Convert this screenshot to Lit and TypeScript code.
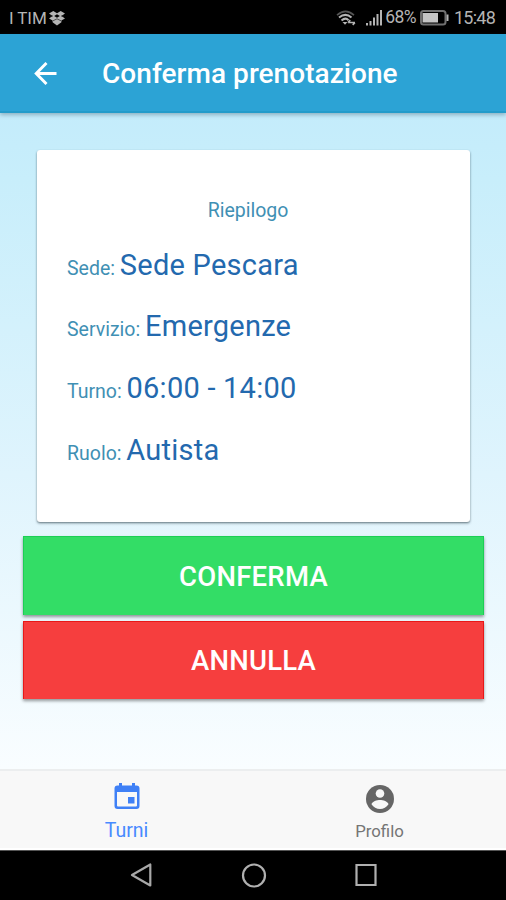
import { LitElement, html, css } from "lit";
import { customElement } from "lit/decorators.js";

const ROWS = [
  { label: "Sede:", value: "Sede Pescara" },
  { label: "Servizio:", value: "Emergenze" },
  { label: "Turno:", value: "06:00 - 14:00" },
  { label: "Ruolo:", value: "Autista" },
];

@customElement("status-bar")
class StatusBar extends LitElement {
  static styles = css`
    :host { display: flex; align-items: center; height: 34px; background: #000; color: #b4b4b4;
      font-size: 17px; line-height: 34px; padding: 2px 11px 0 9px; box-sizing: border-box; }
    svg { display: block; flex: none; }
    .carrier { letter-spacing: -0.1px; margin-right: 2px; }
    .spacer { flex: 1; }
    .wifi { margin-right: 10px; }
    .pct { font-size: 17.5px; letter-spacing: -0.6px; margin: 0 4px 0 2px; padding-bottom: 2px; line-height: 32px; }
    .battery { margin-right: 5px; }
    .time { font-size: 18px; letter-spacing: -0.75px; }
  `;
  render() {
    return html`
      <span class="carrier">I TIM</span>
      <svg width="16" height="15" viewBox="0 0 16 15" fill="#b4b4b4">
        <path d="M4.300 0 8 2.200 11.700 0 16 2.600 12.500 5 16 7.400 12.400 9.600V11.300L8 14.400 3.600 11.300V9.600L0 7.400 3.500 5 0 2.600Z" />
        <path d="M8 3.300 10.800 5 8 6.700 5.200 5Z" fill="#000" />
        <path d="M1 5h3M12 5h3M4 9.800 8 7.800 12 9.800" fill="none" stroke="#222" stroke-width="0.700" />
      </svg>
      <span class="spacer"></span>
      <svg class="wifi" width="20" height="16" viewBox="0 0 20 16" fill="none" stroke="#b4b4b4" stroke-width="1.6">
        <path d="M1 5.200Q9.500 -2.600 18 5.200" stroke="#555" />
        <path d="M3 7.500Q9.500 2.200 15.500 7.500M5.500 10.500Q9.500 7 12.500 10.200" stroke-width="2" />
        <path d="M6.500 12h5l-2.500 2.800z" fill="#b4b4b4" stroke="none" />
        <path d="M12 12.500h7M12 12.500l2.300-2.300M19 12.500l-2.300 2.300" stroke-width="1.700" />
      </svg>
      <svg width="17" height="16" viewBox="0 0 17 16" fill="#b4b4b4">
        <path d="M0 13h2v2.500H0zM3.500 11h2v4.500h-2zM7 7.500h2v8H7zM10.500 4h2v11.500h-2zM14 0h2v15.500h-2z" />
      </svg>
      <span class="pct">68%</span>
      <svg class="battery" width="29" height="16" viewBox="0 0 29 16">
        <rect x="1" y="1" width="24.500" height="13.500" rx="2.500" fill="none" stroke="#707070" stroke-width="2" />
        <rect x="2.500" y="3" width="15.500" height="9.500" fill="#c4c4c4" />
        <path d="M26.500 4.500h2v6.500h-2z" fill="#b4b4b4" />
      </svg>
      <span class="time">15:48</span>
    `;
  }
}

@customElement("app-root")
class AppRoot extends LitElement {
  static styles = css`
    :host { display: flex; flex-direction: column; width: 506px; height: 900px; overflow: hidden;
      font-family: Roboto, sans-serif; background: #fff; }
    svg { display: block; flex: none; }
    .header { flex: none; display: flex; align-items: center; height: 79px; box-sizing: border-box;
      background: #2ca3d5; border-bottom: 2px solid #239bca; padding: 2px 0 0 34px; z-index: 1;
      box-shadow: 0 2px 4px rgba(60, 90, 110, 0.4); }
    .title { margin: 0 0 0 45px; color: #fff; font-weight: 500; font-size: 28px; line-height: 40px;
      letter-spacing: 0.05px; padding-top: 1px; white-space: nowrap; }
    .content { flex: none; height: 656px; box-sizing: border-box; display: flex; flex-direction: column;
      padding: 37px 22px 0 23px; background: linear-gradient(#c4ecfb, #c8eefb 10%, #dff4fd 55%, #f9fdff); }
    .card { flex: none; height: 372px; margin: 0 14px; box-sizing: border-box; background: #fff; border-radius: 3px;
      box-shadow: 0 1px 2px rgba(20, 40, 50, 0.5), 0 2px 3px rgba(20, 40, 50, 0.15);
      padding: 47px 30px 0; color: #3f90b4; font-size: 19.500px; }
    .heading { text-align: center; font-size: 19.500px; font-weight: 400; line-height: 28px; margin: 0 11px 9.700px 0; }
    .row { height: 61.800px; line-height: 61.800px; white-space: nowrap; }
    .value { color: #2369ae; font-size: 29px; letter-spacing: 0.24px; }
    .button { flex: none; display: flex; justify-content: center; align-items: center; height: 79px;
      box-sizing: border-box; width: 461px; border: 0; padding: 1px 0 0;
      font: 500 27.500px Roboto, sans-serif; letter-spacing: 0.25px; color: #fff; }
    .confirm { margin-top: 14px; background: #33dd66;
      box-shadow: inset 0 1px #1ccf55, inset 1px 0 #1ccf55, inset -1px 0 #1ccf55, 0 2px 3px rgba(0, 0, 0, 0.4); }
    .cancel { margin-top: 6px; background: #f63e3e; height: 78px;
      box-shadow: inset 0 1px #e81818, inset 1px 0 #e81818, inset -1px 0 #e81818, 0 2px 3px rgba(0, 0, 0, 0.4); }
    .tabs { flex: none; height: 81px; box-sizing: border-box; border-top: 2px solid #eceeef;
      background: #f8f8f8; display: flex; border-bottom: 2px solid #fff; }
    .tab { flex: 1; display: flex; flex-direction: column; align-items: center; color: #757575; font-size: 16.800px; }
    .tab span { line-height: 24px; }
    .tab svg { margin: 14px 0 6px; }
    .active { color: #488aff; font-size: 19.500px; }
    .active svg { margin: 12px 0 9px; }
    .nav { flex: none; height: 50px; box-sizing: border-box; background: #000; border-top: 1px solid #555;
      display: flex; justify-content: space-between; padding: 12px 129px 0 130px; }
  `;
  render() {
    return html`
      <status-bar></status-bar>
      <header class="header">
        <svg width="23" height="23" viewBox="0 0 23 23" fill="none" stroke="#fff" stroke-width="2.900">
          <path d="M12.500 1 2.200 11.500 12.500 22M2 11.500H22.500" />
        </svg>
        <h1 class="title">Conferma prenotazione</h1>
      </header>
      <main class="content">
        <section class="card">
          <h2 class="heading">Riepilogo</h2>
          ${ROWS.map((r) => html`<div class="row">${r.label} <span class="value">${r.value}</span></div>`)}
        </section>
        <button class="button confirm">CONFERMA</button>
        <button class="button cancel">ANNULLA</button>
      </main>
      <nav class="tabs">
        <div class="tab active">
          <svg width="26" height="27" viewBox="0 0 26 27" fill="#3f80f6">
            <path fill-rule="evenodd" d="M5 0h3v2.500h10V0h3v2.500h1.500a3 3 0 0 1 3 3V23a3 3 0 0 1-3 3h-19a3 3 0 0 1-3-3V5.500a3 3 0 0 1 3-3H5zM3 9v13.500a1 1 0 0 0 1 1h18a1 1 0 0 0 1-1V9z" />
            <path d="M14 14h6.500v6.500H14z" />
          </svg>
          <span>Turni</span>
        </div>
        <div class="tab">
          <svg width="28" height="28" viewBox="0 0 28 28">
            <circle cx="14" cy="14" r="14" fill="#666" />
            <circle cx="14" cy="8.500" r="4.300" fill="#f8f8f8" />
            <path d="M5.500 19.300C6 16.500 11 15 14 15s8 1.500 8.500 4.300C20.500 22.300 17.500 24 14 24s-6.500-1.700-8.500-4.700z" fill="#f8f8f8" />
          </svg>
          <span>Profilo</span>
        </div>
      </nav>
      <footer class="nav">
        <svg width="22" height="24" viewBox="0 0 22 24" fill="none" stroke="#a8a8a8" stroke-width="2.200" stroke-linejoin="round">
          <path d="M20.300 1.500V22.500L2 12z" />
        </svg>
        <svg width="26" height="25" viewBox="0 0 26 25" fill="none" stroke="#b0b0b0" stroke-width="2.200">
          <circle cx="13" cy="12.500" r="11" />
        </svg>
        <svg width="22" height="24" viewBox="0 0 22 24" fill="none" stroke="#b0b0b0" stroke-width="2.200">
          <path d="M1.500 2H20.500V22H1.500z" />
        </svg>
      </footer>
    `;
  }
}
